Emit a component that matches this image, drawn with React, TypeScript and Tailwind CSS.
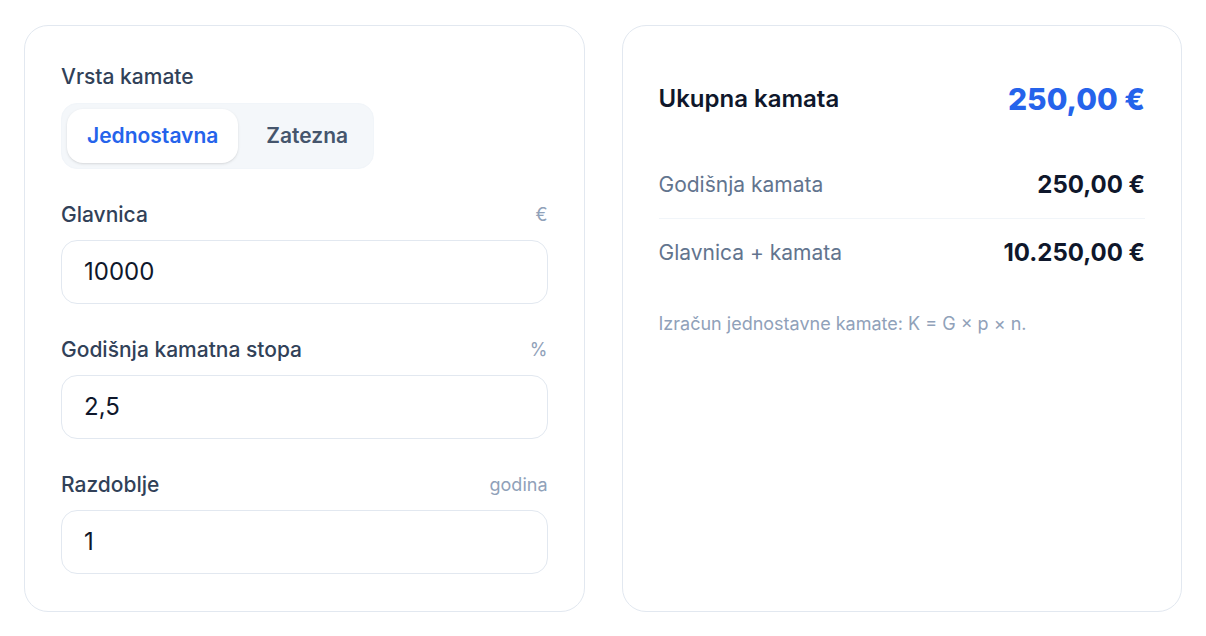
import React from "react";

const Field = ({
  label,
  unit,
  value,
}: {
  label: string;
  unit: string;
  value: string;
}) => (
  <div>
    <div className="mb-[11px] flex h-7 items-center justify-between">
      <span className="text-[21px] leading-7 font-medium text-slate-700">
        {label}
      </span>
      <span className="text-lg leading-7 text-slate-400">{unit}</span>
    </div>
    <div className="flex h-16 items-center rounded-2xl border border-slate-200 bg-white px-[22px] text-2xl text-slate-900">
      {value}
    </div>
  </div>
);

export default function App() {
  return (
    <div
      className="min-h-screen bg-white px-6 pt-[25px]"
      style={{ fontFamily: "Inter, 'Noto Sans', sans-serif" }}
    >
      <div className="grid grid-cols-2 gap-[37px]">
        {/* Inputs */}
        <div className="flex flex-col gap-8 rounded-3xl border border-slate-200 px-9 pt-[37px] pb-[37px]">
          <div>
            <div className="mb-3 text-[21px] leading-7 font-medium text-slate-700">
              Vrsta kamate
            </div>
            <div className="inline-flex gap-2 rounded-2xl border border-slate-100 bg-slate-100/80 p-[5px]">
              <button className="h-[54px] rounded-2xl bg-white px-5 text-[21px] font-semibold text-[#2563eb] shadow-sm">
                Jednostavna
              </button>
              <button className="h-[54px] rounded-2xl px-5 text-[21px] font-semibold text-slate-600">
                Zatezna
              </button>
            </div>
          </div>
          <Field label="Glavnica" unit="€" value="10000" />
          <Field label="Godišnja kamatna stopa" unit="%" value="2,5" />
          <Field label="Razdoblje" unit="godina" value="1" />
        </div>

        {/* Results */}
        <div className="rounded-3xl border border-slate-200 px-9 pt-9">
          <div className="flex h-[74px] items-center justify-between">
            <span className="text-2xl font-semibold text-slate-900">
              Ukupna kamata
            </span>
            <span className="text-3xl font-extrabold text-[#2563eb]">
              250,00 €
            </span>
          </div>
          <div className="mt-4 flex h-[67px] items-center justify-between border-b border-slate-100">
            <span className="text-[21px] text-slate-500">Godišnja kamata</span>
            <span className="text-2xl font-bold text-slate-900">250,00 €</span>
          </div>
          <div className="flex h-[67px] items-center justify-between">
            <span className="text-[21px] text-slate-500">Glavnica + kamata</span>
            <span className="text-2xl font-bold text-slate-900">10.250,00 €</span>
          </div>
          <p className="mt-[26px] text-lg leading-6 text-slate-400">
            Izračun jednostavne kamate: K = G × p × n.
          </p>
        </div>
      </div>
    </div>
  );
}
